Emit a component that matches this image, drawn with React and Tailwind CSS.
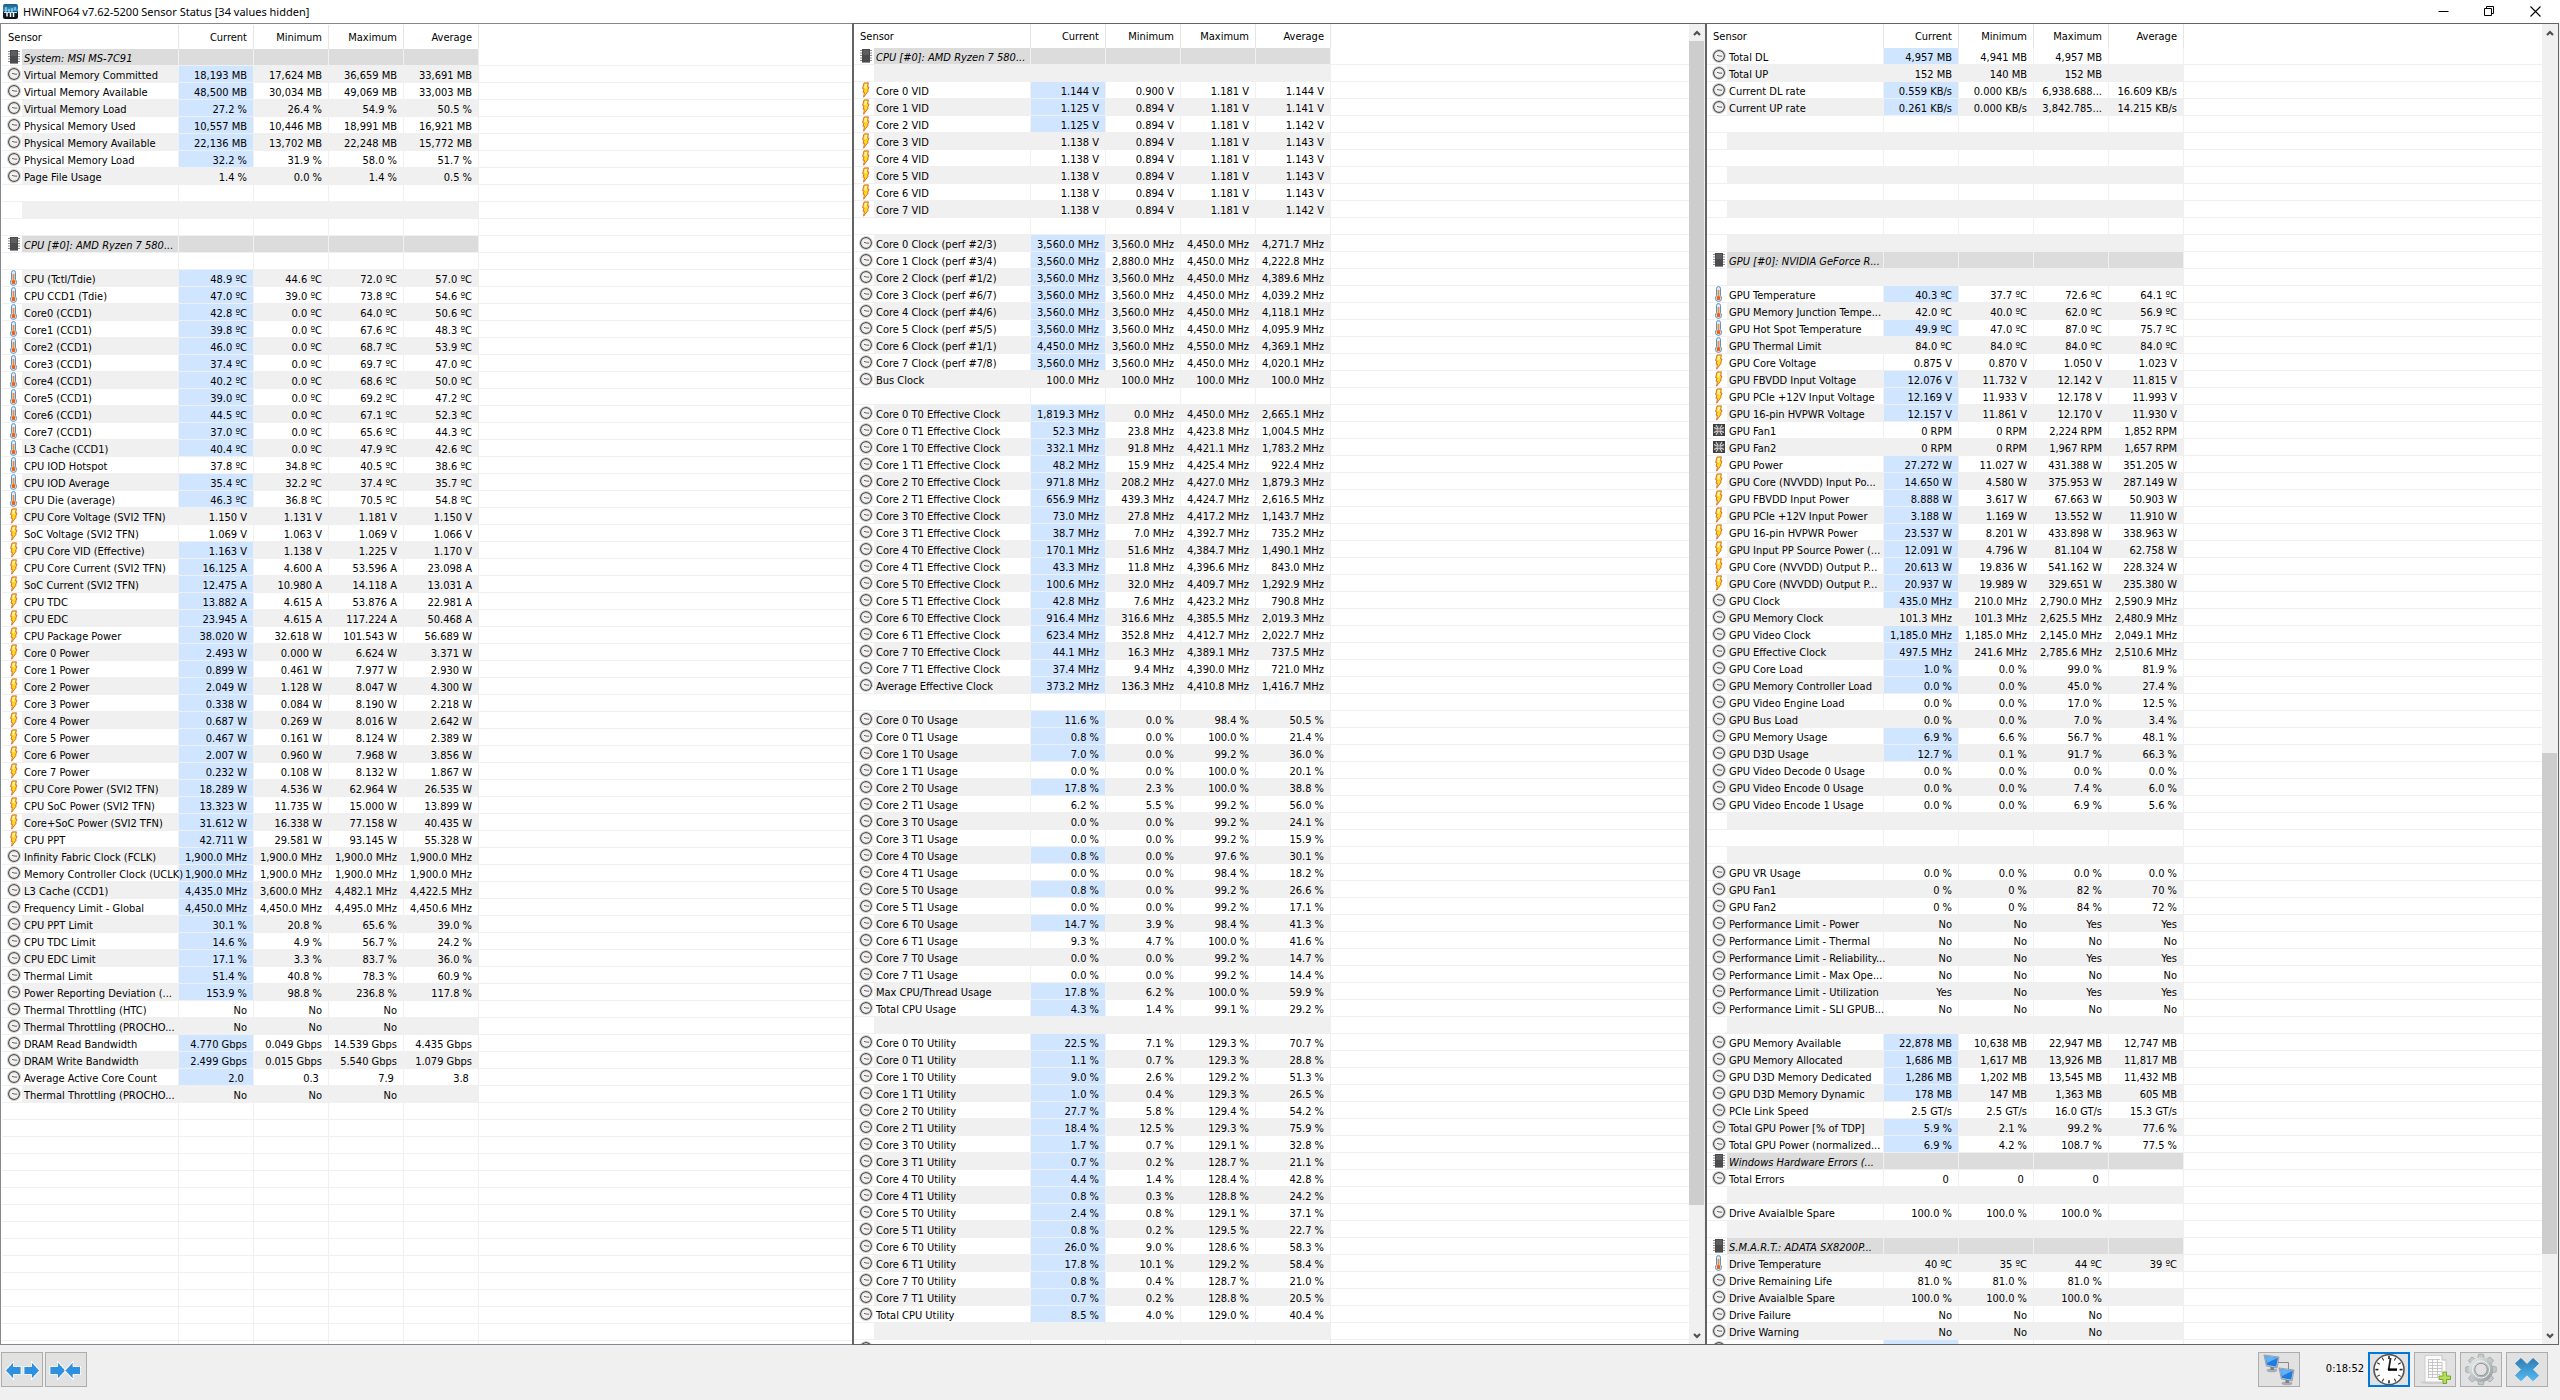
import React from "react";

/* One line per row: icon | name | current | minimum | maximum | average.
   A leading "*" marks a current value that changed since the last poll,
   an empty line is a hidden sensor, "." is unused space under the list. */
const SYSTEM = `g|System: MSI MS-7C91
c|Virtual Memory Committed|*18,193 MB|17,624 MB|36,659 MB|33,691 MB
c|Virtual Memory Available|*48,500 MB|30,034 MB|49,069 MB|33,003 MB
c|Virtual Memory Load|*27.2 %|26.4 %|54.9 %|50.5 %
c|Physical Memory Used|*10,557 MB|10,446 MB|18,991 MB|16,921 MB
c|Physical Memory Available|*22,136 MB|13,702 MB|22,248 MB|15,772 MB
c|Physical Memory Load|*32.2 %|31.9 %|58.0 %|51.7 %
c|Page File Usage|1.4 %|0.0 %|1.4 %|0.5 %



g|CPU [#0]: AMD Ryzen 7 580...

t|CPU (Tctl/Tdie)|*48.9 ºC|44.6 ºC|72.0 ºC|57.0 ºC
t|CPU CCD1 (Tdie)|*47.0 ºC|39.0 ºC|73.8 ºC|54.6 ºC
t|Core0 (CCD1)|*42.8 ºC|0.0 ºC|64.0 ºC|50.6 ºC
t|Core1 (CCD1)|*39.8 ºC|0.0 ºC|67.6 ºC|48.3 ºC
t|Core2 (CCD1)|*46.0 ºC|0.0 ºC|68.7 ºC|53.9 ºC
t|Core3 (CCD1)|*37.4 ºC|0.0 ºC|69.7 ºC|47.0 ºC
t|Core4 (CCD1)|*40.2 ºC|0.0 ºC|68.6 ºC|50.0 ºC
t|Core5 (CCD1)|*39.0 ºC|0.0 ºC|69.2 ºC|47.2 ºC
t|Core6 (CCD1)|*44.5 ºC|0.0 ºC|67.1 ºC|52.3 ºC
t|Core7 (CCD1)|*37.0 ºC|0.0 ºC|65.6 ºC|44.3 ºC
t|L3 Cache (CCD1)|*40.4 ºC|0.0 ºC|47.9 ºC|42.6 ºC
t|CPU IOD Hotspot|37.8 ºC|34.8 ºC|40.5 ºC|38.6 ºC
t|CPU IOD Average|*35.4 ºC|32.2 ºC|37.4 ºC|35.7 ºC
t|CPU Die (average)|*46.3 ºC|36.8 ºC|70.5 ºC|54.8 ºC
b|CPU Core Voltage (SVI2 TFN)|1.150 V|1.131 V|1.181 V|1.150 V
b|SoC Voltage (SVI2 TFN)|1.069 V|1.063 V|1.069 V|1.066 V
b|CPU Core VID (Effective)|*1.163 V|1.138 V|1.225 V|1.170 V
b|CPU Core Current (SVI2 TFN)|*16.125 A|4.600 A|53.596 A|23.098 A
b|SoC Current (SVI2 TFN)|*12.475 A|10.980 A|14.118 A|13.031 A
b|CPU TDC|*13.882 A|4.615 A|53.876 A|22.981 A
b|CPU EDC|*23.945 A|4.615 A|117.224 A|50.468 A
b|CPU Package Power|*38.020 W|32.618 W|101.543 W|56.689 W
b|Core 0 Power|*2.493 W|0.000 W|6.624 W|3.371 W
b|Core 1 Power|*0.899 W|0.461 W|7.977 W|2.930 W
b|Core 2 Power|*2.049 W|1.128 W|8.047 W|4.300 W
b|Core 3 Power|*0.338 W|0.084 W|8.190 W|2.218 W
b|Core 4 Power|*0.687 W|0.269 W|8.016 W|2.642 W
b|Core 5 Power|*0.467 W|0.161 W|8.124 W|2.389 W
b|Core 6 Power|*2.007 W|0.960 W|7.968 W|3.856 W
b|Core 7 Power|*0.232 W|0.108 W|8.132 W|1.867 W
b|CPU Core Power (SVI2 TFN)|*18.289 W|4.536 W|62.964 W|26.535 W
b|CPU SoC Power (SVI2 TFN)|*13.323 W|11.735 W|15.000 W|13.899 W
b|Core+SoC Power (SVI2 TFN)|*31.612 W|16.338 W|77.158 W|40.435 W
b|CPU PPT|*42.711 W|29.581 W|93.145 W|55.328 W
c|Infinity Fabric Clock (FCLK)|*1,900.0 MHz|1,900.0 MHz|1,900.0 MHz|1,900.0 MHz
c|Memory Controller Clock (UCLK)|*1,900.0 MHz|1,900.0 MHz|1,900.0 MHz|1,900.0 MHz
c|L3 Cache (CCD1)|*4,435.0 MHz|3,600.0 MHz|4,482.1 MHz|4,422.5 MHz
c|Frequency Limit - Global|*4,450.0 MHz|4,450.0 MHz|4,495.0 MHz|4,450.6 MHz
c|CPU PPT Limit|*30.1 %|20.8 %|65.6 %|39.0 %
c|CPU TDC Limit|*14.6 %|4.9 %|56.7 %|24.2 %
c|CPU EDC Limit|*17.1 %|3.3 %|83.7 %|36.0 %
c|Thermal Limit|*51.4 %|40.8 %|78.3 %|60.9 %
c|Power Reporting Deviation (...|*153.9 %|98.8 %|236.8 %|117.8 %
c|Thermal Throttling (HTC)|No|No|No|
c|Thermal Throttling (PROCHO...|No|No|No|
c|DRAM Read Bandwidth|*4.770 Gbps|0.049 Gbps|14.539 Gbps|4.435 Gbps
c|DRAM Write Bandwidth|*2.499 Gbps|0.015 Gbps|5.540 Gbps|1.079 Gbps
c|Average Active Core Count|*2.0\u00a0|0.3\u00a0|7.9\u00a0|3.8\u00a0
c|Thermal Throttling (PROCHO...|No|No|No|
.
.
.
.
.
.
.
.
.
.
.
.
.
.
.`;

const CPU = `g|CPU [#0]: AMD Ryzen 7 580...

b|Core 0 VID|*1.144 V|0.900 V|1.181 V|1.144 V
b|Core 1 VID|*1.125 V|0.894 V|1.181 V|1.141 V
b|Core 2 VID|*1.125 V|0.894 V|1.181 V|1.142 V
b|Core 3 VID|1.138 V|0.894 V|1.181 V|1.143 V
b|Core 4 VID|1.138 V|0.894 V|1.181 V|1.143 V
b|Core 5 VID|1.138 V|0.894 V|1.181 V|1.143 V
b|Core 6 VID|1.138 V|0.894 V|1.181 V|1.143 V
b|Core 7 VID|1.138 V|0.894 V|1.181 V|1.142 V

c|Core 0 Clock (perf #2/3)|*3,560.0 MHz|3,560.0 MHz|4,450.0 MHz|4,271.7 MHz
c|Core 1 Clock (perf #3/4)|*3,560.0 MHz|2,880.0 MHz|4,450.0 MHz|4,222.8 MHz
c|Core 2 Clock (perf #1/2)|*3,560.0 MHz|3,560.0 MHz|4,450.0 MHz|4,389.6 MHz
c|Core 3 Clock (perf #6/7)|*3,560.0 MHz|3,560.0 MHz|4,450.0 MHz|4,039.2 MHz
c|Core 4 Clock (perf #4/6)|*3,560.0 MHz|3,560.0 MHz|4,450.0 MHz|4,118.1 MHz
c|Core 5 Clock (perf #5/5)|*3,560.0 MHz|3,560.0 MHz|4,450.0 MHz|4,095.9 MHz
c|Core 6 Clock (perf #1/1)|*4,450.0 MHz|3,560.0 MHz|4,550.0 MHz|4,369.1 MHz
c|Core 7 Clock (perf #7/8)|*3,560.0 MHz|3,560.0 MHz|4,450.0 MHz|4,020.1 MHz
c|Bus Clock|100.0 MHz|100.0 MHz|100.0 MHz|100.0 MHz

c|Core 0 T0 Effective Clock|*1,819.3 MHz|0.0 MHz|4,450.0 MHz|2,665.1 MHz
c|Core 0 T1 Effective Clock|*52.3 MHz|23.8 MHz|4,423.8 MHz|1,004.5 MHz
c|Core 1 T0 Effective Clock|*332.1 MHz|91.8 MHz|4,421.1 MHz|1,783.2 MHz
c|Core 1 T1 Effective Clock|*48.2 MHz|15.9 MHz|4,425.4 MHz|922.4 MHz
c|Core 2 T0 Effective Clock|*971.8 MHz|208.2 MHz|4,427.0 MHz|1,879.3 MHz
c|Core 2 T1 Effective Clock|*656.9 MHz|439.3 MHz|4,424.7 MHz|2,616.5 MHz
c|Core 3 T0 Effective Clock|*73.0 MHz|27.8 MHz|4,417.2 MHz|1,143.7 MHz
c|Core 3 T1 Effective Clock|*38.7 MHz|7.0 MHz|4,392.7 MHz|735.2 MHz
c|Core 4 T0 Effective Clock|*170.1 MHz|51.6 MHz|4,384.7 MHz|1,490.1 MHz
c|Core 4 T1 Effective Clock|*43.3 MHz|11.8 MHz|4,396.6 MHz|843.0 MHz
c|Core 5 T0 Effective Clock|*100.6 MHz|32.0 MHz|4,409.7 MHz|1,292.9 MHz
c|Core 5 T1 Effective Clock|*42.8 MHz|7.6 MHz|4,423.2 MHz|790.8 MHz
c|Core 6 T0 Effective Clock|*916.4 MHz|316.6 MHz|4,385.5 MHz|2,019.3 MHz
c|Core 6 T1 Effective Clock|*623.4 MHz|352.8 MHz|4,412.7 MHz|2,022.7 MHz
c|Core 7 T0 Effective Clock|*44.1 MHz|16.3 MHz|4,389.1 MHz|737.5 MHz
c|Core 7 T1 Effective Clock|*37.4 MHz|9.4 MHz|4,390.0 MHz|721.0 MHz
c|Average Effective Clock|*373.2 MHz|136.3 MHz|4,410.8 MHz|1,416.7 MHz

c|Core 0 T0 Usage|*11.6 %|0.0 %|98.4 %|50.5 %
c|Core 0 T1 Usage|*0.8 %|0.0 %|100.0 %|21.4 %
c|Core 1 T0 Usage|*7.0 %|0.0 %|99.2 %|36.0 %
c|Core 1 T1 Usage|0.0 %|0.0 %|100.0 %|20.1 %
c|Core 2 T0 Usage|*17.8 %|2.3 %|100.0 %|38.8 %
c|Core 2 T1 Usage|6.2 %|5.5 %|99.2 %|56.0 %
c|Core 3 T0 Usage|0.0 %|0.0 %|99.2 %|24.1 %
c|Core 3 T1 Usage|0.0 %|0.0 %|99.2 %|15.9 %
c|Core 4 T0 Usage|*0.8 %|0.0 %|97.6 %|30.1 %
c|Core 4 T1 Usage|0.0 %|0.0 %|98.4 %|18.2 %
c|Core 5 T0 Usage|*0.8 %|0.0 %|99.2 %|26.6 %
c|Core 5 T1 Usage|0.0 %|0.0 %|99.2 %|17.1 %
c|Core 6 T0 Usage|*14.7 %|3.9 %|98.4 %|41.3 %
c|Core 6 T1 Usage|9.3 %|4.7 %|100.0 %|41.6 %
c|Core 7 T0 Usage|0.0 %|0.0 %|99.2 %|14.7 %
c|Core 7 T1 Usage|0.0 %|0.0 %|99.2 %|14.4 %
c|Max CPU/Thread Usage|*17.8 %|6.2 %|100.0 %|59.9 %
c|Total CPU Usage|*4.3 %|1.4 %|99.1 %|29.2 %

c|Core 0 T0 Utility|*22.5 %|7.1 %|129.3 %|70.7 %
c|Core 0 T1 Utility|*1.1 %|0.7 %|129.3 %|28.8 %
c|Core 1 T0 Utility|*9.0 %|2.6 %|129.2 %|51.3 %
c|Core 1 T1 Utility|*1.0 %|0.4 %|129.3 %|26.5 %
c|Core 2 T0 Utility|*27.7 %|5.8 %|129.4 %|54.2 %
c|Core 2 T1 Utility|*18.4 %|12.5 %|129.3 %|75.9 %
c|Core 3 T0 Utility|*1.7 %|0.7 %|129.1 %|32.8 %
c|Core 3 T1 Utility|*0.7 %|0.2 %|128.7 %|21.1 %
c|Core 4 T0 Utility|*4.4 %|1.4 %|128.4 %|42.8 %
c|Core 4 T1 Utility|*0.8 %|0.3 %|128.8 %|24.2 %
c|Core 5 T0 Utility|*2.4 %|0.8 %|129.1 %|37.1 %
c|Core 5 T1 Utility|*0.8 %|0.2 %|129.5 %|22.7 %
c|Core 6 T0 Utility|*26.0 %|9.0 %|128.6 %|58.3 %
c|Core 6 T1 Utility|*17.8 %|10.1 %|129.2 %|58.4 %
c|Core 7 T0 Utility|*0.8 %|0.4 %|128.7 %|21.0 %
c|Core 7 T1 Utility|*0.7 %|0.2 %|128.8 %|20.5 %
c|Total CPU Utility|*8.5 %|4.0 %|129.0 %|40.4 %

c|`;

const GPU = `c|Total DL|*4,957 MB|4,941 MB|4,957 MB|
c|Total UP|152 MB|140 MB|152 MB|
c|Current DL rate|*0.559 KB/s|0.000 KB/s|6,938.688...|16.609 KB/s
c|Current UP rate|*0.261 KB/s|0.000 KB/s|3,842.785...|14.215 KB/s








g|GPU [#0]: NVIDIA GeForce R...

t|GPU Temperature|*40.3 ºC|37.7 ºC|72.6 ºC|64.1 ºC
t|GPU Memory Junction Tempe...|42.0 ºC|40.0 ºC|62.0 ºC|56.9 ºC
t|GPU Hot Spot Temperature|*49.9 ºC|47.0 ºC|87.0 ºC|75.7 ºC
t|GPU Thermal Limit|84.0 ºC|84.0 ºC|84.0 ºC|84.0 ºC
b|GPU Core Voltage|0.875 V|0.870 V|1.050 V|1.023 V
b|GPU FBVDD Input Voltage|*12.076 V|11.732 V|12.142 V|11.815 V
b|GPU PCIe +12V Input Voltage|*12.169 V|11.933 V|12.178 V|11.993 V
b|GPU 16-pin HVPWR Voltage|*12.157 V|11.861 V|12.170 V|11.930 V
f|GPU Fan1|0 RPM|0 RPM|2,224 RPM|1,852 RPM
f|GPU Fan2|0 RPM|0 RPM|1,967 RPM|1,657 RPM
b|GPU Power|*27.272 W|11.027 W|431.388 W|351.205 W
b|GPU Core (NVVDD) Input Po...|*14.650 W|4.580 W|375.953 W|287.149 W
b|GPU FBVDD Input Power|*8.888 W|3.617 W|67.663 W|50.903 W
b|GPU PCIe +12V Input Power|*3.188 W|1.169 W|13.552 W|11.910 W
b|GPU 16-pin HVPWR Power|*23.537 W|8.201 W|433.898 W|338.963 W
b|GPU Input PP Source Power (...|*12.091 W|4.796 W|81.104 W|62.758 W
b|GPU Core (NVVDD) Output P...|*20.613 W|19.836 W|541.162 W|228.324 W
b|GPU Core (NVVDD) Output P...|*20.937 W|19.989 W|329.651 W|235.380 W
c|GPU Clock|*435.0 MHz|210.0 MHz|2,790.0 MHz|2,590.9 MHz
c|GPU Memory Clock|101.3 MHz|101.3 MHz|2,625.5 MHz|2,480.9 MHz
c|GPU Video Clock|*1,185.0 MHz|1,185.0 MHz|2,145.0 MHz|2,049.1 MHz
c|GPU Effective Clock|*497.5 MHz|241.6 MHz|2,785.6 MHz|2,510.6 MHz
c|GPU Core Load|*1.0 %|0.0 %|99.0 %|81.9 %
c|GPU Memory Controller Load|*0.0 %|0.0 %|45.0 %|27.4 %
c|GPU Video Engine Load|0.0 %|0.0 %|17.0 %|12.5 %
c|GPU Bus Load|0.0 %|0.0 %|7.0 %|3.4 %
c|GPU Memory Usage|*6.9 %|6.6 %|56.7 %|48.1 %
c|GPU D3D Usage|*12.7 %|0.1 %|91.7 %|66.3 %
c|GPU Video Decode 0 Usage|0.0 %|0.0 %|0.0 %|0.0 %
c|GPU Video Encode 0 Usage|0.0 %|0.0 %|7.4 %|6.0 %
c|GPU Video Encode 1 Usage|0.0 %|0.0 %|6.9 %|5.6 %



c|GPU VR Usage|0.0 %|0.0 %|0.0 %|0.0 %
c|GPU Fan1|0 %|0 %|82 %|70 %
c|GPU Fan2|0 %|0 %|84 %|72 %
c|Performance Limit - Power|No|No|Yes|Yes
c|Performance Limit - Thermal|No|No|No|No
c|Performance Limit - Reliability...|No|No|Yes|Yes
c|Performance Limit - Max Ope...|No|No|No|No
c|Performance Limit - Utilization|Yes|No|Yes|Yes
c|Performance Limit - SLI GPUB...|No|No|No|No

c|GPU Memory Available|*22,878 MB|10,638 MB|22,947 MB|12,747 MB
c|GPU Memory Allocated|*1,686 MB|1,617 MB|13,926 MB|11,817 MB
c|GPU D3D Memory Dedicated|*1,286 MB|1,202 MB|13,545 MB|11,432 MB
c|GPU D3D Memory Dynamic|*178 MB|147 MB|1,363 MB|605 MB
c|PCIe Link Speed|2.5 GT/s|2.5 GT/s|16.0 GT/s|15.3 GT/s
c|Total GPU Power [% of TDP]|*5.9 %|2.1 %|99.2 %|77.6 %
c|Total GPU Power (normalized...|*6.9 %|4.2 %|108.7 %|77.5 %
g|Windows Hardware Errors (...
c|Total Errors|0\u00a0|0\u00a0|0\u00a0|

c|Drive Avaialble Spare|100.0 %|100.0 %|100.0 %|

g|S.M.A.R.T.: ADATA SX8200P...
t|Drive Temperature|40 ºC|35 ºC|44 ºC|39 ºC
c|Drive Remaining Life|81.0 %|81.0 %|81.0 %|
c|Drive Avaialble Spare|100.0 %|100.0 %|100.0 %|
c|Drive Failure|No|No|No|
c|Drive Warning|No|No|No|
c||*`;

const icons = {
  c: (
    <>
      <circle cx="8" cy="8" r="6.6" fill="none" stroke="#c9c9c9" strokeWidth="0.8" />
      <circle cx="8" cy="8" r="5.4" fill="#f3f3f3" stroke="#4a4a4a" strokeWidth="1.2" />
      <circle cx="8" cy="8" r="4" fill="none" stroke="#c4c4c4" strokeWidth="0.8" strokeDasharray="0.8 1.3" />
      <path d="M6 7.3 L8.2 8 L11 8.2" fill="none" stroke="#6b5a58" strokeWidth="1" />
    </>
  ),
  t: (
    <>
      <path
        d="M5.5 2.4 Q5.5 0.6 7.5 0.6 Q9.5 0.6 9.5 2.4 L9.5 9.8 Q10.6 11 10.6 12.4 Q10.6 15.4 7.5 15.4 Q4.4 15.4 4.4 12.4 Q4.4 11 5.5 9.8 Z"
        fill="#dcecf7"
        stroke="#5f93bd"
        strokeWidth="1"
      />
      <rect x="6.6" y="4" width="1.8" height="7" fill="#f08a3c" />
      <rect x="5.8" y="10.2" width="3.4" height="3.8" rx="1" fill="#f2600c" />
    </>
  ),
  b: (
    <>
      <path
        d="M6 1 L10.4 0.8 L9.6 5 L11 5 L9.6 9 L10.2 9.2 L5.6 15.2 L6.4 10.4 L5 10.2 L6 7 L4.6 6.6 Z"
        fill="#ffd91c"
        stroke="#d0662a"
        strokeWidth="0.9"
      />
      <path d="M6.8 2 L9.2 1.9 L8.2 6.2 L6.4 6 Z" fill="#fff3b0" />
    </>
  ),
  g: (
    <>
      <path
        d="M2 2.5 H14 M2 5 H14 M2 7.5 H14 M2 10 H14 M2 12.5 H14"
        stroke="#8d8d8d"
        strokeWidth="1.1"
      />
      <rect x="4" y="1" width="8" height="13.6" fill="#4b4b4d" />
      <rect x="5" y="2" width="6" height="5" fill="#5d5d60" />
    </>
  ),
  f: (
    <>
      <rect x="2" y="2" width="12" height="12" fill="#3d3d3d" />
      <circle cx="8" cy="8" r="5.2" fill="#555" />
      <path
        d="M8 8 L5 3 M8 8 L11 3 M8 8 L13 5.4 M8 8 L13 10.6 M8 8 L11 13 M8 8 L5 13 M8 8 L3 10.6 M8 8 L3 5.4"
        stroke="#d2d2d2"
        strokeWidth="1.1"
      />
      <circle cx="8" cy="8" r="1.5" fill="#8a7476" />
    </>
  ),
};

const cell = "h-[17px] border-b border-r border-[#f0f0f0] p-0";

function Row({ line, index }) {
  const filler = line === ".";
  const [icon, name, current = "", ...rest] = filler ? [] : line.split("|");
  const group = icon === "g";
  const tint = group ? "bg-[#dcdcdc]" : !filler && index % 2 ? "bg-[#f0f0f0]" : "";
  const changed = current.startsWith("*");
  const values = [current.replace("*", ""), rest[0], rest[1], rest[2]];
  return (
    <tr>
      <td className="h-[17px] border-b border-[#f0f0f0] p-0 pl-1">
        {icon ? (
          <svg className="block size-4" viewBox="0 0 16 16" aria-hidden="true">
            {icons[icon]}
          </svg>
        ) : null}
      </td>
      <td className={`${cell} ${tint}`}>
        <div className={`pt-[3px] pl-0.5 leading-[13px] ${group ? "italic" : ""}`}>{name}</div>
      </td>
      {values.map((value, i) => (
        <td key={i} className={`${cell} text-right ${i === 0 && changed ? "bg-[#d0e5ff]" : tint}`}>
          <div className="pt-[3px] pr-1.5 leading-[13px]">{value}</div>
        </td>
      ))}
      <td className="h-[17px] border-b border-[#f0f0f0] p-0" />
    </tr>
  );
}

function SensorTable({ data, label }) {
  const head = "h-6 border-r border-[#e5e5e5] p-0 pt-0.5 pr-1.5 text-right leading-[22px] font-normal";
  return (
    <div className="min-w-0 flex-1 overflow-hidden">
      <table aria-label={label} className="w-full table-fixed border-separate border-spacing-0 whitespace-nowrap">
        <colgroup>
          <col className="w-5" />
          <col className="w-[157px]" />
          <col className="w-[75px]" />
          <col className="w-[75px]" />
          <col className="w-[75px]" />
          <col className="w-[75px]" />
          <col />
        </colgroup>
        <thead>
          <tr>
            <th
              colSpan={2}
              className="h-6 border-r border-[#e5e5e5] p-0 pt-0.5 pl-1.5 text-left leading-[22px] font-normal"
            >
              Sensor
            </th>
            <th className={head}>Current</th>
            <th className={head}>Minimum</th>
            <th className={head}>Maximum</th>
            <th className={head}>Average</th>
            <td />
          </tr>
        </thead>
        <tbody>
          {data.split("\n").map((line, i) => (
            <Row key={i} line={line} index={i} />
          ))}
        </tbody>
      </table>
    </div>
  );
}

function Scrollbar({ before, size }) {
  const button = "flex h-[17px] shrink-0 items-center justify-center";
  return (
    <div className="flex w-4 shrink-0 flex-col bg-[#f0f0f0]">
      <button type="button" aria-label="Scroll up" className={button}>
        <svg className="h-2 w-2" viewBox="0 0 8 8" aria-hidden="true">
          <path d="M1 6 L4 3 L7 6" fill="none" stroke="#505050" strokeWidth="2.2" />
        </svg>
      </button>
      <div className="flex min-h-0 flex-1 flex-col">
        <div style={{ flexGrow: before }} />
        <div className="w-[15px] bg-[#cdcdcd]" style={{ flexGrow: size }} />
        <div style={{ flexGrow: 1286 - before - size }} />
      </div>
      <button type="button" aria-label="Scroll down" className={button}>
        <svg className="h-2 w-2" viewBox="0 0 8 8" aria-hidden="true">
          <path d="M1 2 L4 5 L7 2" fill="none" stroke="#505050" strokeWidth="2.2" />
        </svg>
      </button>
    </div>
  );
}

function AppIcon() {
  return (
    <svg className="h-[15px] w-[15px]" viewBox="0 0 15 15" aria-hidden="true">
      <defs>
        <linearGradient id="app" x1="0" y1="0" x2="0" y2="1">
          <stop offset="0" stopColor="#1d5a80" />
          <stop offset="0.45" stopColor="#2f9fd0" />
          <stop offset="0.55" stopColor="#14222c" />
          <stop offset="1" stopColor="#0a0f14" />
        </linearGradient>
      </defs>
      <rect width="15" height="15" rx="2" fill="url(#app)" />
      <path d="M3 3 V8 M6 5 V8 M9 4 V8 M12 3 V6" stroke="#cfeefa" strokeWidth="1" />
      <path d="M1 8.5 H14" stroke="#bfe6f5" strokeWidth="1" />
      <path d="M4 9 V12.5 M7.5 9 V13 M10.5 9 V13" stroke="#fff" strokeWidth="1.5" />
    </svg>
  );
}

function ToolButton({ label, active, children }) {
  return (
    <button
      type="button"
      aria-label={label}
      className={`h-[35px] w-[42px] bg-[#e1e1e1] ${active ? "border-2 border-[#0078d7]" : "border border-[#adadad]"}`}
    >
      <svg className="block h-full w-full" viewBox={active ? "2 2 38 31" : "1 1 40 33"} aria-hidden="true">
        {children}
      </svg>
    </button>
  );
}

function BlueArrows({ paths }) {
  return paths.map((d) => (
    <g key={d}>
      <path d={d} fill="none" stroke="#fff" strokeWidth="2" />
      <path d={d} fill="none" stroke="#9a9a9a" strokeWidth="0.8" strokeDasharray="1 1.6" />
      <path d={d} fill="#2d90e0" />
    </g>
  ));
}

function Monitor({ x, y }) {
  return (
    <g transform={`translate(${x} ${y})`}>
      <ellipse cx="9" cy="15.4" rx="5.4" ry="1.8" fill="#a9adb1" />
      <path d="M7.5 11 L11 12 L11 15 L7.5 15 Z" fill="#7d8286" />
      <path d="M1 0 L16 2 L14 13 L3.4 11 Z" fill="#d4d9de" stroke="#6d7379" strokeWidth="0.6" />
      <path d="M2 1 L15 2.8 L13.2 11.8 L4 10 Z" fill="#1f7ce0" />
      <path d="M2 1 L15 2.8 L4 8 Z" fill="#63b0f5" />
    </g>
  );
}

const spokes = [0, 30, 60, 90, 120, 150, 180, 210, 240, 270, 300, 330];
const teeth = [0, 45, 90, 135, 180, 225, 270, 315];

function Toolbar() {
  return (
    <footer className="flex h-[55px] shrink-0 items-start justify-between pt-[7px] pr-3 pl-px">
      <div className="flex gap-0.5">
        <ToolButton label="Expand columns">
          <BlueArrows
            paths={[
              "M5 18.5 L12 11 V15 H19.5 V22 H12 V26 Z",
              "M38 18.5 L31 11 V15 H23.5 V22 H31 V26 Z",
            ]}
          />
        </ToolButton>
        <ToolButton label="Shrink columns">
          <BlueArrows
            paths={[
              "M20 18.5 L13 11 V15 H5.5 V22 H13 V26 Z",
              "M20.5 18.5 L27.5 11 V15 H35 V22 H27.5 V26 Z",
            ]}
          />
        </ToolButton>
      </div>
      <div className="flex gap-1">
        <ToolButton label="Remote monitoring">
          <path d="M20 10.5 H30.5 V17" fill="none" stroke="#8a8a8a" strokeWidth="1" />
          <Monitor x={5} y={3} />
          <Monitor x={20} y={16} />
        </ToolButton>
        <time className="ml-[22px] text-[11px] leading-[33px]">0:18:52</time>
        <ToolButton label="Reset timer" active>
          <circle cx="21" cy="17.6" r="15" fill="#fff" stroke="#555" strokeWidth="1.6" />
          {spokes.map((a) => (
            <path
              key={a}
              d="M21 4 V7"
              stroke="#222"
              strokeWidth={a % 90 ? 1 : 1.6}
              transform={`rotate(${a} 21 17.6)`}
            />
          ))}
          <path d="M20.6 18 L22.6 6" stroke="#222" strokeWidth="1.8" />
          <path d="M20 17.6 H29" stroke="#000" strokeWidth="2.4" />
        </ToolButton>
        <ToolButton label="Log to file">
          <ellipse cx="20" cy="30.5" rx="14" ry="1.6" fill="#cfcfcf" />
          <path d="M11 3.5 H28 L32 8 V30 H11 Z" fill="#fbfbfb" stroke="#c8c8c8" strokeWidth="0.8" />
          <path d="M28 3.5 V8 H32" fill="#e6e6e6" stroke="#b5b5b5" strokeWidth="0.8" />
          <path
            d="M14 7.5 H26 M14 10.5 H28 M14 13.5 H28 M14 16.5 H28 M14 19.5 H28 M14 22.5 H26 M14 25.5 H24 M14.5 7 V26 M18.5 7 V26 M23.5 7 V26 M28 10 V22"
            stroke="#bdbdbd"
            strokeWidth="0.8"
          />
          <path
            d="M29 20 H32.5 V24 H36.5 V27.5 H32.5 V31.5 H29 V27.5 H25 V24 H29 Z"
            fill="#b5e05a"
            stroke="#6f9e1f"
            strokeWidth="0.9"
          />
        </ToolButton>
        <ToolButton label="Configure">
          <defs>
            <linearGradient id="gear" x1="0" y1="0" x2="1" y2="1">
              <stop offset="0" stopColor="#e3e7e8" />
              <stop offset="1" stopColor="#9ba1a3" />
            </linearGradient>
          </defs>
          {teeth.map((a) => (
            <path
              key={a}
              d="M17.4 8 L18.6 2.2 H23.4 L24.6 8 Z"
              fill="#c3c8ca"
              stroke="#9aa0a2"
              strokeWidth="0.7"
              transform={`rotate(${a} 21 17.5)`}
            />
          ))}
          <circle cx="21" cy="17.5" r="9.2" fill="none" stroke="url(#gear)" strokeWidth="6" />
          <circle cx="21" cy="17.5" r="8.6" fill="none" stroke="#f1f4f4" strokeWidth="1" />
          <circle cx="21" cy="17.5" r="6.2" fill="#e1e1e1" stroke="#8f9597" strokeWidth="1" />
        </ToolButton>
        <ToolButton label="Close sensors">
          <defs>
            <linearGradient id="cross" x1="0" y1="0" x2="0" y2="1">
              <stop offset="0" stopColor="#2d7db5" />
              <stop offset="1" stopColor="#56b9f0" />
            </linearGradient>
          </defs>
          <path
            d="M15 6.5 L21 12.5 L27 6.5 L32.5 11.5 L26.7 17.5 L32.5 23.5 L27 28.8 L21 22.8 L15 28.8 L9.5 23.5 L15.3 17.5 L9.5 11.5 Z"
            fill="url(#cross)"
            stroke="url(#cross)"
            strokeWidth="1"
            strokeLinejoin="round"
          />
        </ToolButton>
      </div>
    </footer>
  );
}

export default function App() {
  const control = "flex w-[46px] items-center justify-center";
  return (
    <div className="flex h-screen flex-col overflow-hidden bg-[#f0f0f0] text-[11px] text-black [font-family:'DejaVu_Sans_Condensed','DejaVu_Sans',sans-serif]">
      <header className="flex h-[23px] shrink-0 items-stretch bg-white pr-0.5 pl-[3px]">
        <div className="flex flex-1 items-center gap-[5px]">
          <AppIcon />
          <h1 className="text-[11px] leading-[23px] [font-family:'Noto_Sans',sans-serif]">
            HWiNFO64 v7.62-5200 Sensor Status [34 values hidden]
          </h1>
        </div>
        <button type="button" aria-label="Minimize" className={control}>
          <svg className="h-[11px] w-[11px]" viewBox="0 0 11 11" aria-hidden="true">
            <path d="M0.5 5.5 H10.5" stroke="#000" strokeWidth="1" />
          </svg>
        </button>
        <button type="button" aria-label="Restore" className={control}>
          <svg className="h-[11px] w-[11px]" viewBox="0 0 11 11" aria-hidden="true">
            <path
              d="M0.5 2.5 H7.5 V9.5 H0.5 Z M2.5 2.5 V0.5 H9.5 V7.5 H7.5"
              fill="none"
              stroke="#000"
              strokeWidth="1"
            />
          </svg>
        </button>
        <button type="button" aria-label="Close" className={control}>
          <svg className="h-[11px] w-[11px]" viewBox="0 0 11 11" aria-hidden="true">
            <path d="M0.5 0.5 L10.5 10.5 M10.5 0.5 L0.5 10.5" stroke="#000" strokeWidth="1.1" />
          </svg>
        </button>
      </header>
      <main className="grid min-h-0 flex-1 grid-cols-[852fr_853fr_854fr] grid-rows-[minmax(0,1fr)] pr-px">
        <section className="flex min-w-0 border-y border-l border-[#828790] bg-white pt-px pl-px">
          <SensorTable data={SYSTEM} label="System and CPU sensors" />
        </section>
        <section className="flex min-w-0 border-y border-l-2 border-[#646464] bg-white">
          <SensorTable data={CPU} label="CPU core sensors" />
          <Scrollbar before={0} size={1164} />
        </section>
        <section className="flex min-w-0 border-y border-r border-l-2 border-[#646464] bg-white">
          <SensorTable data={GPU} label="Network, GPU and drive sensors" />
          <Scrollbar before={712} size={501} />
        </section>
      </main>
      <Toolbar />
    </div>
  );
}
